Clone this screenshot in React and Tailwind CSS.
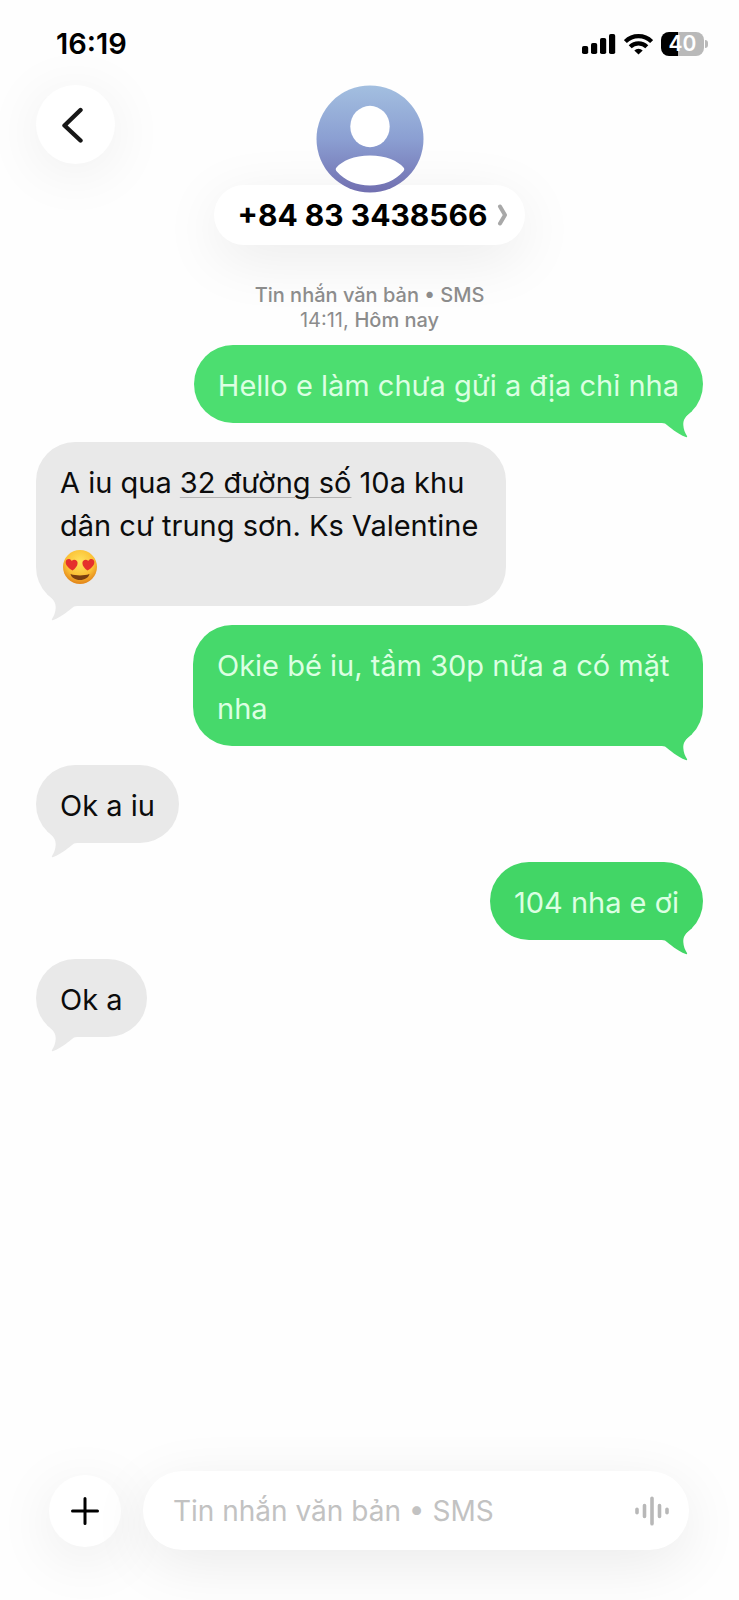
import { useState } from "react";

const MESSAGES = [
  { id: 1, mine: true, tone: "bg-[#4cde70] text-[#4cde70]", body: "Hello e làm chưa gửi a địa chỉ nha" },
  {
    id: 2,
    mine: false,
    body: (
      <>
        A iu qua{" "}
        <a href="#map" className="underline decoration-[#b4b4b4] decoration-1 underline-offset-4">
          32 đường số
        </a>{" "}
        10a khu dân cư trung sơn. Ks Valentine <HeartEyes />
      </>
    ),
  },
  { id: 3, mine: true, tone: "bg-[#46d96b] text-[#46d96b]", body: "Okie bé iu, tầm 30p nữa a có mặt nha" },
  { id: 4, mine: false, body: "Ok a iu" },
  { id: 5, mine: true, tone: "bg-[#42d666] text-[#42d666]", body: "104 nha e ơi" },
  { id: 6, mine: false, body: "Ok a" },
];

/* ──────── Icons ──────── */
function HeartEyes() {
  return (
    <svg role="img" aria-label="😍" viewBox="0 0 36 36" className="-mt-2 ml-0.5 inline-block h-9 w-9 align-middle">
      <defs>
        <radialGradient id="face" cx="50%" cy="35%" r="62%">
          <stop offset="0" stopColor="#ffe45e" />
          <stop offset="0.65" stopColor="#fbc136" />
          <stop offset="1" stopColor="#e58a1c" />
        </radialGradient>
      </defs>
      <circle cx="18" cy="18" r="17" fill="url(#face)" />
      <path d="M10.500 21.500C6 19 3 15.500 3.800 12.300c.7-2.700 4.300-3.200 5.900-.4 2.300-2.300 6-.8 5.900 2.200 0 2.900-2.200 5.600-5.100 7.400z" fill="#e5302c" />
      <path d="M25.500 21.500C30 19 33 15.500 32.200 12.300c-.7-2.700-4.300-3.200-5.900-.4-2.300-2.300-6-.8-5.900 2.200 0 2.900 2.200 5.600 5.100 7.400z" fill="#e5302c" />
      <path d="M8.500 25c3 1 6 1.400 9.500 1.400s6.500-.4 9.500-1.400c-.8 3.600-4.700 6-9.500 6s-8.700-2.400-9.500-6z" fill="#7a3f10" />
    </svg>
  );
}

function SignalIcon() {
  return (
    <svg aria-hidden="true" viewBox="0 0 34 22" className="h-[22px] w-[34px]" fill="#000">
      <rect x="0" y="13" width="6.200" height="8" rx="1.800" />
      <rect x="9" y="10" width="6.200" height="11" rx="1.800" />
      <rect x="18" y="5" width="6.200" height="16" rx="1.800" />
      <rect x="27" y="1" width="6.200" height="20" rx="1.800" />
    </svg>
  );
}

function WifiIcon() {
  return (
    <svg aria-hidden="true" viewBox="0 0 29 22" className="h-[22px] w-[29px]" fill="none" stroke="#000" strokeWidth="4.200">
      <path d="M1.400 8.600a18.600 18.600 0 0 1 26.200 0" />
      <path d="M6.200 13.800a11.800 11.800 0 0 1 16.600 0" />
      <path d="M14.500 21.500l-4.200-4a6 6 0 0 1 8.400 0z" fill="#000" stroke="none" />
    </svg>
  );
}

function AvatarIcon() {
  return (
    <svg role="img" aria-label="Ảnh liên hệ" viewBox="0 0 108 108" className="relative z-10 h-[108px] w-[108px]">
      <defs>
        <linearGradient id="avatar" x1="0" y1="0" x2="0" y2="1">
          <stop offset="0" stopColor="#a3bfe0" />
          <stop offset="0.5" stopColor="#8b9fd2" />
          <stop offset="1" stopColor="#716fb0" />
        </linearGradient>
      </defs>
      <circle cx="54" cy="54" r="53.500" fill="url(#avatar)" />
      <ellipse cx="54" cy="41.500" rx="19.700" ry="20.700" fill="#fff" />
      <path d="M20.500 82.500C26 76 38 70.500 54 70.500S82 76 87.500 82.500c1.200 1.400.9 2.600-.3 4C79 95.500 67.500 100.500 54 100.500S29 95.500 20.800 86.500c-1.200-1.400-1.500-2.600-.3-4z" fill="#fff" />
    </svg>
  );
}

function Tail({ mine }) {
  return (
    <svg
      aria-hidden="true"
      viewBox="0 0 48 32"
      fill="currentColor"
      className={`absolute -bottom-4 h-8 w-12 ${mine ? "right-0 -scale-x-100" : "left-0"}`}
    >
      <path d="M11 4C17 9 20 12 19.700 18 19.500 22 18 26 16 29c-.5 1 .2 1.500 1.200 1C26 27 33 20 38 16.500 40 16 42 16 45 16V4z" />
    </svg>
  );
}

function Bubble({ mine, tone, children }) {
  return (
    <li
      className={`relative rounded-[39px] px-6 pt-[19px] pb-4 ${
        mine ? `max-w-[510px] self-end ${tone}` : "max-w-[470px] self-start bg-[#e9e9e9] text-[#e9e9e9]"
      }`}
    >
      <Tail mine={mine} />
      <p className={`relative text-[29px] leading-[43px] ${mine ? "text-[#dcffe2]" : "text-[#0c0c0c]"}`}>{children}</p>
    </li>
  );
}

export default function App() {
  const [text, setText] = useState("");

  return (
    <div className="flex min-h-screen flex-col overflow-x-hidden bg-[#fefefe] font-['Inter','Noto_Sans',sans-serif] text-black">
      {/* Status bar */}
      <div className="flex items-center justify-between pt-6 pr-[31px] pl-14">
        <span className="text-[29px] leading-10 font-semibold">16:19</span>
        <div className="flex items-center gap-2">
          <SignalIcon />
          <WifiIcon />
          <div className="flex items-center gap-px">
            <div className="flex h-6 w-[43px] items-center justify-center rounded-lg bg-linear-to-r from-black from-40% to-[#b9b9b9] to-40% text-[21px] leading-6 font-semibold text-white">
              40
            </div>
            <span className="h-2 w-[3px] rounded-r-full bg-[#b9b9b9]" />
          </div>
        </div>
      </div>

      {/* Contact header */}
      <header className="grid grid-cols-[79px_1fr_79px] items-start px-9 pt-[21px]">
        <button
          type="button"
          aria-label="Quay lại"
          className="flex h-[79px] w-[79px] items-center justify-center rounded-full bg-white pr-1.5 shadow-[0_8px_60px_rgba(0,0,0,0.07)]"
        >
          <svg aria-hidden="true" viewBox="0 0 24 36" className="h-9 w-6" fill="none" stroke="#171717" strokeWidth="4.400" strokeLinecap="round" strokeLinejoin="round">
            <path d="M19.500 3L3.500 18.500l16 15" />
          </svg>
        </button>
        <div className="flex flex-col items-center">
          <AvatarIcon />
          <button
            type="button"
            className="-mt-2 flex h-[60px] items-center gap-2.5 rounded-full bg-white pr-4 pl-6 text-[30px] font-bold whitespace-nowrap shadow-[0_14px_60px_rgba(0,0,0,0.08)]"
          >
            +84 83 3438566
            <svg aria-hidden="true" viewBox="0 0 12 22" className="h-[22px] w-3" fill="none" stroke="#a8a8a8" strokeWidth="4" strokeLinecap="round" strokeLinejoin="round">
              <path d="M3 2.500L8 11 3 19.500" />
            </svg>
          </button>
        </div>
      </header>

      {/* Conversation */}
      <main className="flex-1 px-9 pt-[38px]">
        <p className="text-center text-[20px] leading-[25px] text-[#8c8c8c]">
          <span className="font-medium">Tin nhắn văn bản • SMS</span>
          <br />
          14:11, <span className="font-medium">Hôm nay</span>
        </p>
        <ul className="mt-3 flex flex-col gap-[19px]">
          {MESSAGES.map((m) => (
            <Bubble key={m.id} mine={m.mine} tone={m.tone}>
              {m.body}
            </Bubble>
          ))}
        </ul>
      </main>

      {/* Composer */}
      <footer className="flex items-center gap-[22px] pr-[50px] pb-[50px] pl-[49px]">
        <button
          type="button"
          aria-label="Thêm"
          className="flex h-[72px] w-[72px] shrink-0 items-center justify-center rounded-full bg-white shadow-[0_12px_60px_rgba(0,0,0,0.08)]"
        >
          <svg aria-hidden="true" viewBox="0 0 28 28" className="h-7 w-7" fill="none" stroke="#000" strokeWidth="3" strokeLinecap="round">
            <path d="M14 1.500v25M1.500 14h25" />
          </svg>
        </button>
        <div className="flex h-[79px] min-w-0 flex-1 items-center rounded-full bg-white pr-5 pl-[30px] shadow-[0_14px_60px_rgba(0,0,0,0.08)]">
          <input
            type="text"
            aria-label="Tin nhắn văn bản"
            value={text}
            onChange={(e) => setText(e.target.value)}
            placeholder="Tin nhắn văn bản • SMS"
            className="h-full min-w-0 flex-1 bg-transparent text-[28px] outline-none placeholder:text-[#c2c2c2]"
          />
          <button type="button" aria-label="Ghi âm" className="shrink-0">
            <svg aria-hidden="true" viewBox="0 0 34 30" className="h-[30px] w-[34px]" fill="none" stroke="#b8b8b8" strokeWidth="3.600" strokeLinecap="round">
              <path d="M2 13.200v3.600M9.500 9.500v11M17 2.200v25.600M24.500 9.500v11M32 13.200v3.600" />
            </svg>
          </button>
        </div>
      </footer>
    </div>
  );
}
